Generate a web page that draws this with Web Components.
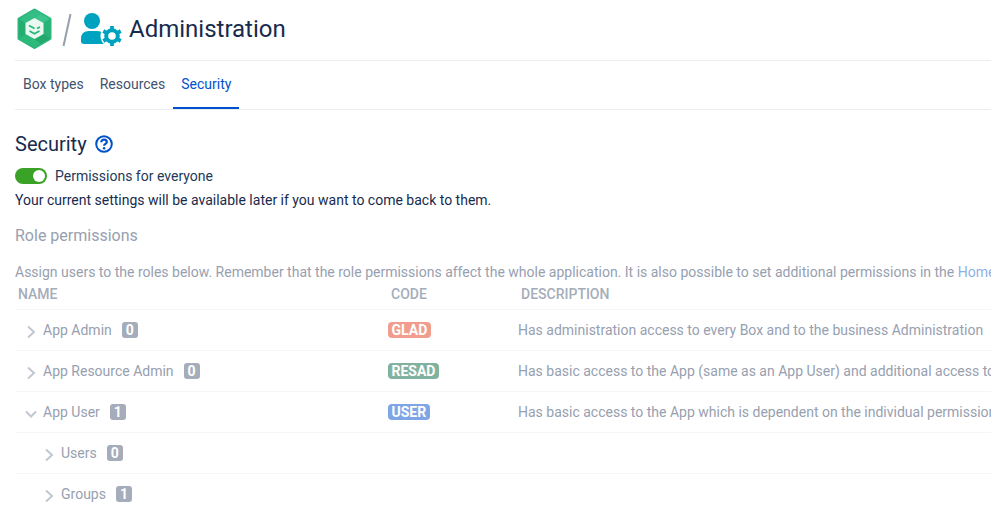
<!DOCTYPE html>
<html lang="en">
<head>
<meta charset="utf-8">
<title>Administration</title>
<style>
  html, body { margin: 0; height: 100%; background: #fff; overflow: hidden; }
  body { font: 14px/20px Roboto, sans-serif; color: #172b4d; }
</style>
</head>
<body>
<admin-page>
  <admin-header title="Administration"></admin-header>
  <admin-tabs>
    <a>Box types</a>
    <a>Resources</a>
    <a active>Security</a>
  </admin-tabs>
  <security-panel>
    <role-table>
      <role-row name="App Admin" count="0" code="GLAD" color="#f09d8e" description="Has administration access to every Box and to the business Administration"></role-row>
      <role-row name="App Resource Admin" count="0" code="RESAD" color="#81b29f" description="Has basic access to the App (same as an App User) and additional access to all Resources"></role-row>
      <role-row name="App User" count="1" code="USER" color="#7ea6e6" open description="Has basic access to the App which is dependent on the individual permissions set in each Box"></role-row>
      <role-row name="Users" count="0" level="1"></role-row>
      <role-row name="Groups" count="1" level="1"></role-row>
    </role-table>
  </security-panel>
</admin-page>

<script>
const pageTemplate = document.createElement('template')
pageTemplate.innerHTML = /* html */ `
<style>
  :host { display: block; width: 991px; height: 511px; overflow: hidden; box-sizing: border-box; padding-left: 15px; }
</style>
<slot></slot>
`
class AdminPage extends HTMLElement {
  constructor() {
    super()
    this.attachShadow({ mode: 'open' })
  }
  connectedCallback() {
    this.shadowRoot.appendChild(pageTemplate.content.cloneNode(true))
  }
}

const headerTemplate = document.createElement('template')
headerTemplate.innerHTML = /* html */ `
<style>
  :host { display: flex; align-items: center; height: 60px; border-bottom: 1px solid #ebecf0; }
  svg { display: block; flex: none; }
  .logo { margin: 0 0 2px 1px; }
  .slash { margin: 0 8px 0 9px; }
  h1 { margin: 0 0 2px 7px; font: 400 24px/32px Roboto, sans-serif; color: #172b4d; }
</style>
<svg class="logo" width="37" height="42" viewBox="0 0 37 42">
  <path d="M18.500 2 L34 11 V30.500 L18.500 39.500 L3 30.500 V11 Z" fill="#2bb67a" stroke="#2bb67a" stroke-width="3" stroke-linejoin="round"/>
  <path d="M18.500 2 L34 11 L27.500 15 L12 6 Z" fill="#3cc48c"/>
  <path d="M34 11 V30.500 L27.500 26 V15 Z" fill="#2ab377"/>
  <path d="M34 30.500 L18.500 39.500 L12 35.500 L27.500 26 Z" fill="#23a96c"/>
  <path d="M18.500 39.500 L3 30.500 L9.500 26 L25 35.500 Z" fill="#2db87c"/>
  <path d="M3 30.500 V11 L9.500 15 V26 Z" fill="#26ad70"/>
  <path d="M3 11 L18.500 2 L25 6 L9.500 15 Z" fill="#34bd84"/>
  <path d="M18.500 10 L27.500 15 V26 L18.500 31 L9.500 26 V15 Z" fill="#e9f8f1"/>
  <path d="M13 17.500 L18.500 20.500 M21 20.500 L24 19 M13.500 23 L18.500 25.800 L23.500 23" fill="none" stroke="#2bb67a" stroke-width="1.700"/>
</svg>
<svg class="slash" width="10" height="34" viewBox="0 0 10 34">
  <path d="M8.500 1 L1.500 33" stroke="#97a0af" stroke-width="2" fill="none"/>
</svg>
<svg width="42" height="36" viewBox="0 0 42 36">
  <circle cx="12" cy="9" r="8" fill="#00a3bf"/>
  <path d="M1 29 V27 Q1 19 9 19 H17 Q25 19 25 27 V32 H4 Q1 32 1 29 Z" fill="#00a3bf"/>
  <circle cx="32" cy="24" r="11.500" fill="#fff"/>
  <g fill="none" stroke="#00a3bf">
    <circle cx="32" cy="24" r="5.800" stroke-width="4"/>
    <path d="M32 14 V17.500 M32 30.500 V34 M23.300 19 L26.400 20.800 M37.600 27.200 L40.700 29 M23.300 29 L26.400 27.200 M37.600 20.800 L40.700 19" stroke-width="3.800"/>
  </g>
</svg>
<h1></h1>
`
class AdminHeader extends HTMLElement {
  constructor() {
    super()
    this.attachShadow({ mode: 'open' })
  }
  connectedCallback() {
    this.shadowRoot.appendChild(headerTemplate.content.cloneNode(true))
    this.shadowRoot.querySelector('h1').textContent = this.getAttribute('title')
  }
}

const tabsTemplate = document.createElement('template')
tabsTemplate.innerHTML = /* html */ `
<style>
  :host { display: flex; height: 48px; border-bottom: 1px solid #ebecf0; }
  a {
    display: block;
    padding: 0 8px;
    line-height: 46px;
    height: 48px;
    box-sizing: border-box;
    color: #42526e;
    border-bottom: 2px solid transparent;
  }
  a.active { color: #0052cc; border-bottom-color: #0052cc; }
</style>
<slot hidden></slot>
<nav style="display:flex"></nav>
`
class AdminTabs extends HTMLElement {
  constructor() {
    super()
    this.attachShadow({ mode: 'open' })
  }
  connectedCallback() {
    this.shadowRoot.appendChild(tabsTemplate.content.cloneNode(true))
    const nav = this.shadowRoot.querySelector('nav')
    this.querySelectorAll('a').forEach((link) => {
      const tab = document.createElement('a')
      tab.textContent = link.textContent
      if (link.hasAttribute('active')) tab.className = 'active'
      nav.appendChild(tab)
    })
  }
}

const panelTemplate = document.createElement('template')
panelTemplate.innerHTML = /* html */ `
<style>
  :host { display: block; white-space: nowrap; }
  h2 { display: flex; align-items: center; gap: 8px; margin: 0; padding-top: 20px; height: 28px; font: 400 20px/28px Roboto, sans-serif; color: #172b4d; }
  svg { display: block; }
  .switch { display: flex; align-items: center; gap: 8px; margin-top: 8px; height: 20px; color: #253858; }
  .note { margin-top: 4px; height: 20px; color: #172b4d; }
  h3 { margin: 14px 0 0; font: 400 16px/24px Roboto, sans-serif; color: #97a0af; }
  .intro { margin-top: 14px; height: 20px; color: #97a0af; }
  .intro a { color: #8eb0e8; }
</style>
<h2>Security
  <svg width="18" height="18" viewBox="0 0 18 18">
    <circle cx="9" cy="9" r="7.800" fill="none" stroke="#0052cc" stroke-width="2"/>
    <path d="M6.200 7.200 C6.200 5.600 7.500 4.700 9 4.700 C10.600 4.700 11.800 5.700 11.800 7.100 C11.800 8.900 9.100 8.900 9.100 10.700" fill="none" stroke="#0052cc" stroke-width="2.200"/>
    <circle cx="9.100" cy="13.200" r="1.300" fill="#0052cc"/>
  </svg>
</h2>
<div class="switch"><toggle-switch></toggle-switch>Permissions for everyone</div>
<div class="note">Your current settings will be available later if you want to come back to them.</div>
<h3>Role permissions</h3>
<div class="intro">Assign users to the roles below. Remember that the role permissions affect the whole application. It is also possible to set additional permissions in the <a>Home Box</a></div>
<slot></slot>
`
class SecurityPanel extends HTMLElement {
  constructor() {
    super()
    this.attachShadow({ mode: 'open' })
  }
  connectedCallback() {
    this.shadowRoot.appendChild(panelTemplate.content.cloneNode(true))
  }
}

const toggleTemplate = document.createElement('template')
toggleTemplate.innerHTML = /* html */ `
<style>
  :host { display: flex; justify-content: flex-end; align-items: center; box-sizing: border-box; width: 32px; height: 16px; padding-right: 2px; border-radius: 8px; background: #3aa327; }
  i { display: block; width: 12px; height: 12px; border-radius: 50%; background: #fff; }
</style>
<i></i>
`
class ToggleSwitch extends HTMLElement {
  constructor() {
    super()
    this.attachShadow({ mode: 'open' })
  }
  connectedCallback() {
    this.shadowRoot.appendChild(toggleTemplate.content.cloneNode(true))
  }
}

const tableTemplate = document.createElement('template')
tableTemplate.innerHTML = /* html */ `
<style>
  :host { display: block; width: 1400px; }
  .head {
    display: grid;
    grid-template-columns: 373px 130px 1fr;
    height: 26px;
    padding: 0 0 0 3px;
    align-items: center;
    margin-top: 1px;
    border-bottom: 1px solid #f4f5f7;
    font-weight: 500;
    color: #a5adba;
  }
  .head span { position: relative; top: -2px; }
</style>
<div class="head"><span>NAME</span><span>CODE</span><span>DESCRIPTION</span></div>
<slot></slot>
`
class RoleTable extends HTMLElement {
  constructor() {
    super()
    this.attachShadow({ mode: 'open' })
  }
  connectedCallback() {
    this.shadowRoot.appendChild(tableTemplate.content.cloneNode(true))
  }
}

const rowTemplate = document.createElement('template')
rowTemplate.innerHTML = /* html */ `
<style>
  :host { display: grid; grid-template-columns: 373px 130px 1fr; height: 40px; align-items: center; border-bottom: 1px solid #f4f5f7; color: #97a0af; }
  .name { display: flex; align-items: center; padding-left: 10px; }
  :host([level="1"]) .name { padding-left: 28px; }
  svg { display: block; flex: none; margin: 4px 6px 0 0; }
  .count { margin-left: 10px; min-width: 16px; height: 16px; border-radius: 3px; background: #a5adba; color: #fff; font: 700 14px/16px Roboto, sans-serif; text-align: center; }
  .code { display: inline-block; padding: 0 3.500px; height: 16px; border-radius: 4px; color: #fff; font: 700 14px/16px Roboto, sans-serif; }
</style>
<div class="name">
  <svg width="12" height="14" viewBox="0 0 12 14"><path fill="none" stroke="#c1c7d0" stroke-width="2"/></svg>
  <span class="label"></span><span class="count"></span>
</div>
<div><span class="code"></span></div>
<div class="description"></div>
`
class RoleRow extends HTMLElement {
  constructor() {
    super()
    this.attachShadow({ mode: 'open' })
  }
  connectedCallback() {
    const root = this.shadowRoot
    root.appendChild(rowTemplate.content.cloneNode(true))
    root.querySelector('.label').textContent = this.getAttribute('name')
    root.querySelector('.count').textContent = this.getAttribute('count')
    root.querySelector('.description').textContent = this.getAttribute('description') || ''
    root.querySelector('path').setAttribute('d', this.hasAttribute('open') ? 'M1 4.500 L6 9.500 L11 4.500' : 'M3 1.500 L9 7 L3 12.500')
    const code = root.querySelector('.code')
    if (this.hasAttribute('code')) {
      code.textContent = this.getAttribute('code')
      code.style.background = this.getAttribute('color')
    } else {
      code.style.display = 'none'
    }
  }
}

customElements.define('admin-page', AdminPage)
customElements.define('admin-header', AdminHeader)
customElements.define('admin-tabs', AdminTabs)
customElements.define('security-panel', SecurityPanel)
customElements.define('toggle-switch', ToggleSwitch)
customElements.define('role-table', RoleTable)
customElements.define('role-row', RoleRow)
</script>
</body>
</html>
